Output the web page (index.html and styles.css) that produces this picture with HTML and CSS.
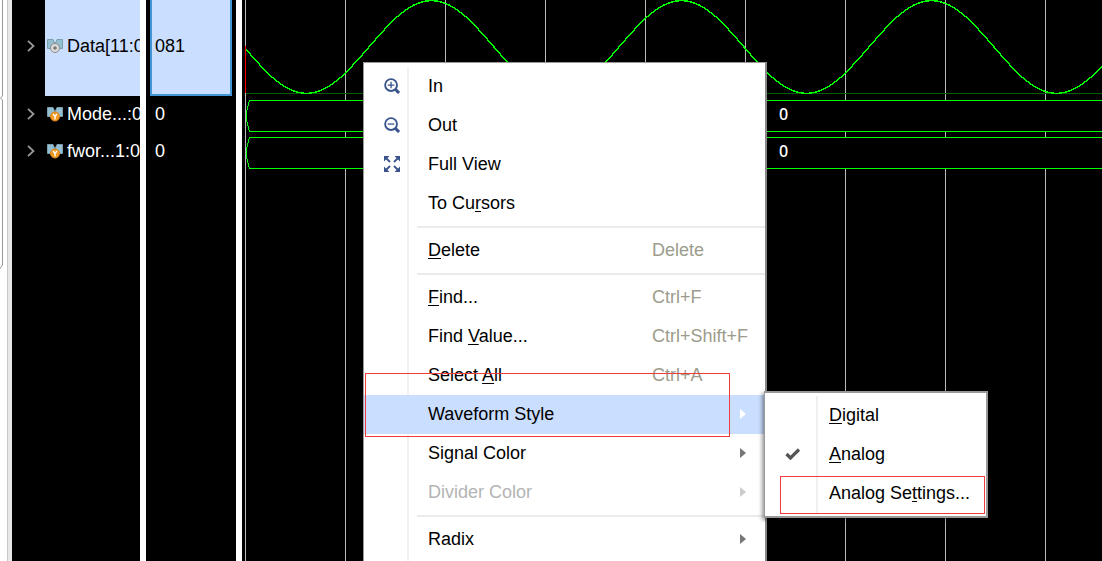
FILE: index.html
```html
<!DOCTYPE html>
<html lang="en">
<head>
<meta charset="utf-8">
<title>Waveform viewer</title>
<link rel="stylesheet" href="styles.css">
</head>
<body>
<svg class="defs" aria-hidden="true">
  <symbol id="bus" viewBox="0 0 16 16">
    <path d="M.5 1.500h5.500l2 4.500 2-4.500h5.500v9h-3l-2-3h-5l-2 3h-3z" fill="#93bfd2" stroke="#7c9daa"/>
  </symbol>
  <symbol id="chevron" viewBox="0 0 8 12">
    <path d="M1 .8 6.500 6 1 11.200" fill="none" stroke="#999" stroke-width="1.800"/>
  </symbol>
  <symbol id="arrow" viewBox="0 0 6 10"><path d="M0 0v10l6-5z" fill="currentColor"/></symbol>
</svg>
<div class="viewer">
  <div class="edge">
    <svg class="edge-line" viewBox="0 0 7 280" width="7" height="280" aria-hidden="true">
      <path d="M2.500 0v96l-2 2 2 2v165l-3 4" fill="none" stroke="#999"/>
    </svg>
  </div>
  <div class="column names">
    <div class="row tall">
      <button class="expand" aria-label="Expand Data"><svg width="8" height="12"><use href="#chevron"/></svg></button>
      <div class="signal selected">
        <svg class="signal-icon" viewBox="0 0 16 16" aria-hidden="true"><use href="#bus"/><circle cx="8" cy="10" r="4.500" fill="#ddd" stroke="#888"/><circle cx="8" cy="10" r="1.800" fill="#777"/></svg>
        <span>Data[11:0</span>
      </div>
    </div>
    <div class="row">
      <button class="expand" aria-label="Expand Mode"><svg width="8" height="12"><use href="#chevron"/></svg></button>
      <div class="signal">
        <svg class="signal-icon" viewBox="0 0 16 16" aria-hidden="true"><use href="#bus"/><circle cx="8" cy="10.500" r="4.500" fill="#f59a22" stroke="#d9821a"/><path d="M6 8 8 10.500 10 8M8 10.500v3" fill="none" stroke="#fff" stroke-width="1.400"/></svg>
        <span>Mode...:0</span>
      </div>
    </div>
    <div class="row">
      <button class="expand" aria-label="Expand fword"><svg width="8" height="12"><use href="#chevron"/></svg></button>
      <div class="signal">
        <svg class="signal-icon" viewBox="0 0 16 16" aria-hidden="true"><use href="#bus"/><circle cx="8" cy="10.500" r="4.500" fill="#f59a22" stroke="#d9821a"/><path d="M6 8 8 10.500 10 8M8 10.500v3" fill="none" stroke="#fff" stroke-width="1.400"/></svg>
        <span>fwor...1:0</span>
      </div>
    </div>
  </div>
  <div class="column values">
    <div class="row tall value-selected">081</div>
    <div class="row value">0</div>
    <div class="row value">0</div>
  </div>
  <div class="waves">
    <svg class="plot" width="100%" height="100%" role="img" aria-label="Signal waveforms" shape-rendering="crispEdges">
      <defs>
        <pattern id="grid" x="3" width="100" height="100" patternUnits="userSpaceOnUse"><path d="M.5 0v100" stroke="#bbb"/></pattern>
      </defs>
      <rect x="3" width="100%" height="100%" fill="url(#grid)"/>
      <path d="M4 93.500H3000" stroke="#006000"/>
      <svg x="4" width="100%" height="96">
        <path d="M-64.500.5C-19 .5 15 93.500 60.500 93.500S140 .5 185.500.5s79.500 93 125 93 79.500-93 125-93 79.500 93 125 93 79.500-93 125-93 79.500 93 125 93 79.500-93 125-93 79.500 93 125 93 79.500-93 125-93 79.500 93 125 93 79.500-93 125-93" fill="none" stroke="#0f0" stroke-width="1.400"/>
      </svg>
      <path d="M3.500 46v47" stroke="#f00"/>
      <g fill="#000" stroke="#0f0">
        <path d="M3000 100.500H7.500L4.500 112v8l3 11.500H3000"/>
        <path d="M3000 137.500H7.500L4.500 149v8l3 11.500H3000"/>
      </g>
      <g class="bus-value"><text x="537" y="120">0</text><text x="537" y="157">0</text></g>
    </svg>
  </div>

  <div class="menu context-menu" role="menu">
    <button class="item" role="menuitem"><span class="glyph"><svg viewBox="0 0 17 17" width="16" height="16"><g fill="none" stroke="#39558c"><circle cx="7.500" cy="7.500" r="6.300" stroke-width="2"/><path d="M7.500 4v7M4 7.500h7" stroke-width="1.400"/><path d="m12 12 4 4" stroke-width="3.200"/></g></svg></span><span class="label">In</span></button>
    <button class="item" role="menuitem"><span class="glyph"><svg viewBox="0 0 17 17" width="16" height="16"><g fill="none" stroke="#39558c"><circle cx="7.500" cy="7.500" r="6.300" stroke-width="2"/><path d="M4 7.500h7" stroke-width="1.400"/><path d="m12 12 4 4" stroke-width="3.200"/></g></svg></span><span class="label">Out</span></button>
    <button class="item" role="menuitem"><span class="glyph"><svg viewBox="0 0 16 16" width="16" height="16"><path d="M0 0h5.500L0 5.500zM10.500 0H16v5.500zM0 10.500V16h5.500zM16 10.500V16h-5.500z" fill="#39558c"/><path d="m2 2 4 4m8-4-4 4m-8 8 4-4m8 4-4-4" stroke="#39558c" stroke-width="1.800"/></svg></span><span class="label">Full View</span></button>
    <button class="item" role="menuitem"><span class="glyph"></span><span class="label">To Cu<u>r</u>sors</span></button>
    <hr>
    <button class="item" role="menuitem"><span class="glyph"></span><span class="label"><u>D</u>elete</span><span class="shortcut">Delete</span></button>
    <hr>
    <button class="item" role="menuitem"><span class="glyph"></span><span class="label"><u>F</u>ind...</span><span class="shortcut">Ctrl+F</span></button>
    <button class="item" role="menuitem"><span class="glyph"></span><span class="label">Find <u>V</u>alue...</span><span class="shortcut">Ctrl+Shift+F</span></button>
    <button class="item" role="menuitem"><span class="glyph"></span><span class="label">Select <u>A</u>ll</span><span class="shortcut">Ctrl+A</span></button>
    <div class="submenu-host">
      <button class="item active" role="menuitem" aria-haspopup="true"><span class="glyph"></span><span class="label">Waveform Style</span><svg class="arrow" width="6" height="10"><use href="#arrow"/></svg></button>
      <div class="menu submenu" role="menu">
        <button class="item" role="menuitem"><span class="glyph"></span><span class="label"><u>D</u>igital</span></button>
        <button class="item" role="menuitem"><span class="glyph"><svg viewBox="0 0 16 12" width="16" height="12"><path d="m1.500 6 4 4L14 1.500" fill="none" stroke="#555" stroke-width="3.200"/></svg></span><span class="label"><u>A</u>nalog</span></button>
        <button class="item" role="menuitem"><span class="glyph"></span><span class="label">Analog Se<u>t</u>tings...</span></button>
        <div class="mark mark-settings"></div>
      </div>
      <div class="mark mark-style"></div>
    </div>
    <button class="item" role="menuitem"><span class="glyph"></span><span class="label">Signal Color</span><svg class="arrow" width="6" height="10"><use href="#arrow"/></svg></button>
    <button class="item" role="menuitem" disabled><span class="glyph"></span><span class="label">Divider Color</span><svg class="arrow" width="6" height="10"><use href="#arrow"/></svg></button>
    <hr>
    <button class="item" role="menuitem"><span class="glyph"></span><span class="label">Radix</span><svg class="arrow" width="6" height="10"><use href="#arrow"/></svg></button>
  </div>
</div>
</body>
</html>
```
FILE: styles.css
```css
* { box-sizing: border-box; }

body {
  margin: 0;
  background: #fff;
  color: #000;
  font: 18px/22px "Liberation Sans", Arial, sans-serif;
}

button {
  border: 0;
  padding: 0;
  background: none;
  color: inherit;
  font: inherit;
  text-align: left;
}

svg { display: block; flex: none; }
.defs { position: absolute; width: 0; height: 0; }

.viewer {
  position: relative;
  display: flex;
  height: 100vh;
  overflow: hidden;
}

.edge {
  flex: none;
  width: 12px;
  border-right: 4px solid #e8e8e8;
  box-shadow: inset -1px 0 #c8c8c8;
}

.column { flex: none; background: #000; color: #fff; overflow: hidden; }
.names { width: 128px; }
.values { width: 90px; margin: 0 6px; }

.row { display: flex; align-items: center; height: 37px; padding-bottom: 2px; }
.tall { height: 96px; padding-bottom: 0; }

.expand { flex: none; width: 33px; padding-left: 15px; }
.tall .expand { padding-bottom: 4px; }

.signal {
  display: flex;
  flex: 1;
  align-items: center;
  align-self: stretch;
  gap: 4px;
  min-width: 0;
  padding-left: 2px;
  overflow: hidden;
  white-space: nowrap;
}
.signal-icon { width: 16px; height: 16px; }
.selected { padding-bottom: 4px; background: #cadeff; color: #000; }

.value { padding-left: 9px; }
.value-selected {
  margin: 0 4px;
  padding: 0 3px 2px;
  border: solid #4296d6;
  border-width: 0 2px 2px;
  background: #cadeff;
  color: #000;
}

.waves { flex: 1; min-width: 0; background: #000; }
.bus-value { fill: #fff; font: 500 16px "Noto Sans", sans-serif; }

.menu {
  position: absolute;
  border: 1px solid #999;
  background: linear-gradient(#f0f0f0, #f0f0f0) 43px 4px / 2px 100% no-repeat #fff;
  white-space: nowrap;
}

.context-menu {
  top: 62px;
  bottom: 0;
  left: 363px;
  width: 404px;
  padding-top: 4px;
  border-right: 2px solid #888;
  border-bottom: 0;
}

.item {
  display: flex;
  align-items: center;
  width: 100%;
  height: 39px;
  padding: 0 19px 2px 0;
}
.active { background: #cadeff; }
.item:disabled { color: #b4b4b4; }

.glyph { display: flex; flex: none; justify-content: center; width: 56px; }
.label { flex: 1; padding-left: 8px; }
.shortcut { flex: none; width: 94px; color: #9c9c8c; }

.arrow { color: #777; }
.active .arrow { color: #fff; }
.item:disabled .arrow { color: #ccc; }

u { text-decoration-thickness: 1px; text-underline-offset: 2px; text-decoration-skip-ink: none; }

hr { height: 2px; margin: 3px 0 3px 53px; border: 0; background: #ebebeb; }

.submenu-host { position: relative; }

.submenu {
  top: -4px;
  left: 400px;
  width: 224px;
  padding: 3px 0;
  border: 2px solid #999;
  border-left-width: 1px;
  background-position: 51px 3px;
  background-size: 2px 117px;
  box-shadow: -2px 2px 4px rgb(0 0 0 / 40%);
}

.mark { position: absolute; border: 1px solid #f03c3c; pointer-events: none; }
.mark-style { top: -22px; left: 1px; width: 365px; height: 64px; }
.mark-settings { right: 1px; bottom: 2px; width: 205px; height: 38px; }
```
